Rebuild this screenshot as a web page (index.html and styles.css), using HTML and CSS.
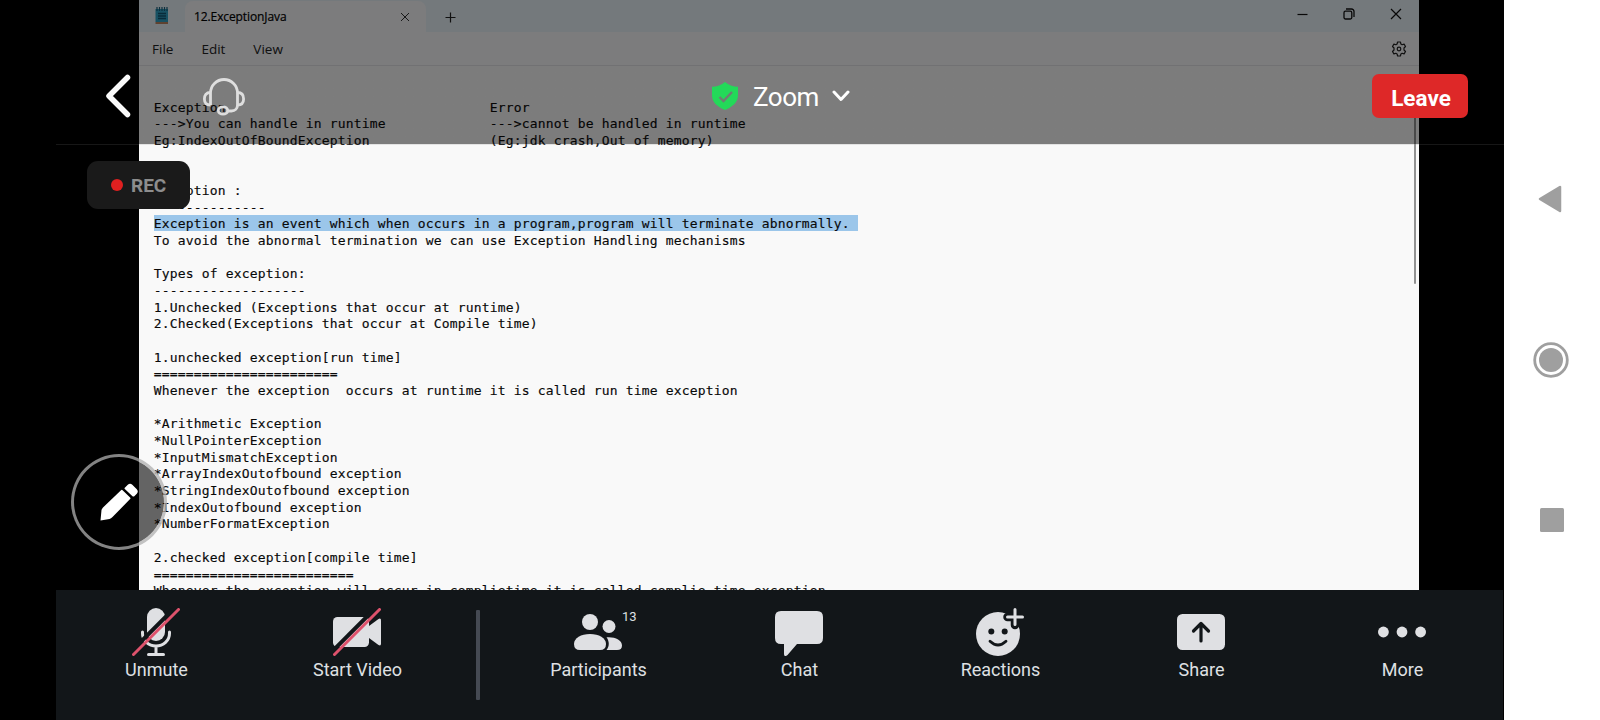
FILE: index.html
```html
<!DOCTYPE html>
<html lang="en">
<head>
<meta charset="utf-8">
<title>Zoom</title>
<link rel="stylesheet" href="styles.css">
</head>
<body>
<div class="device">
  <main class="meeting">
    <section class="shared">
      <div class="tabs">
        <svg class="app-icon" width="14" height="18" viewBox="0 0 14 18"><rect x=".5" y="2" width="12.500" height="13" fill="#2fa3c6"/><path d="M2 0v4M4.500 0v4M7 0v4M9.500 0v4M12 0v4" stroke="#185f7d" stroke-width="1.200"/><path d="M3 6.500h8M3 9h8M3 11.500h8" stroke="#125673" stroke-width="1.400"/><rect x=".5" y="15" width="12.500" height="2" fill="#bd8460"/></svg>
        <div class="tab"><span class="tab-title">12.ExceptionJava</span>
          <svg width="10" height="10" viewBox="0 0 10 10"><path d="M1 1l8 8M9 1L1 9" stroke="#333" stroke-width="1"/></svg></div>
        <svg class="plus" width="11" height="11" viewBox="0 0 11 11"><path d="M5.500 .5v10M.5 5.500h10" stroke="#222" stroke-width="1.200"/></svg>
        <div class="controls">
          <svg width="11" height="12" viewBox="0 0 11 12"><path d="M.5 6.500h10" stroke="#111" stroke-width="1.200"/></svg>
          <svg width="12" height="12" viewBox="0 0 12 12" fill="none" stroke="#111" stroke-width="1.300"><rect x="1" y="3.200" width="7.800" height="7.800" rx="1.500"/><path d="M3 1h5.500a2.500 2.500 0 0 1 2.500 2.500V9"/></svg>
          <svg width="12" height="12" viewBox="0 0 12 12"><path d="M1 1l10 10M11 1L1 11" stroke="#111" stroke-width="1.200"/></svg>
        </div>
      </div>
      <div class="menu"><span>File</span><span>Edit</span><span>View</span>
        <svg class="gear" width="16" height="16" viewBox="0 0 16 16" fill="none" stroke="#222" stroke-width="1.200" stroke-linejoin="round"><path d="M6.600 1h2.800l.5 2 1.200.7 2-.6 1.400 2.400L13 7v2l1.500 1.500-1.400 2.400-2-.6-1.200.7-.5 2H6.600l-.5-2-1.200-.7-2 .6-1.400-2.400L3 9V7L1.500 5.500l1.400-2.400 2 .6L6.100 3z"/><circle cx="8" cy="8" r="1.800"/></svg>
      </div>
      <div class="editor">
<pre class="text">Exception                                 Error
---&gt;You can handle in runtime             ---&gt;cannot be handled in runtime
Eg:IndexOutOfBoundException               (Eg:jdk crash,Out of memory)


Exception :
--------------
<span class="selected">Exception is an event which when occurs in a program,program will terminate abnormally. </span>
To avoid the abnormal termination we can use Exception Handling mechanisms

Types of exception:
-------------------
1.Unchecked (Exceptions that occur at runtime)
2.Checked(Exceptions that occur at Compile time)

1.unchecked exception[run time]
=======================
Whenever the exception  occurs at runtime it is called run time exception

*Arithmetic Exception
*NullPointerException
*InputMismatchException
*ArrayIndexOutofbound exception
*StringIndexOutofbound exception
*IndexOutofbound exception
*NumberFormatException

2.checked exception[compile time]
=========================
Whenever the exception will occur in complietime it is called complie time exception</pre>
        <div class="scroll"></div>
      </div>
    </section>

    <header class="topbar">
      <svg class="back" width="28" height="46" viewBox="0 0 28 46"><path d="M23.500 4.500L5 23l18.500 18.500" fill="none" stroke="#fafafa" stroke-width="5.500" stroke-linecap="round" stroke-linejoin="round"/></svg>
      <svg class="headset" width="44" height="38" viewBox="0 0 44 38" fill="none" stroke="#dedede" stroke-width="2.800"><path d="M8.500 27V15a13.500 13.500 0 0 1 27 0v12c0 3.500-2.500 6-6 6H26"/><path d="M8.500 14.500C4 14.500 2.400 17.500 2.400 21s1.600 6 6.100 6M35.500 14.500c4.500 0 6.100 3 6.100 6.500s-1.600 6-6.100 6"/><ellipse cx="21" cy="32.500" rx="4.700" ry="3.700"/></svg>
      <div class="title">
        <svg width="26" height="28" viewBox="0 0 26 28"><path d="M13 0c3.500 3 8 4.600 13 4.800v8.700c0 6.500-5 11-13 14.500C5 24.500 0 20 0 13.500V4.800C5 4.600 9.500 3 13 0z" fill="#23d959"/><path d="M7.500 15l4 4L20 10" fill="none" stroke="#707b73" stroke-width="2.400"/></svg>
        <span>Zoom</span>
        <svg class="caret" width="18" height="12" viewBox="0 0 18 12"><path d="M2 2l7 7.500L16 2" fill="none" stroke="#fff" stroke-width="3" stroke-linecap="round" stroke-linejoin="round"/></svg>
      </div>
      <button class="leave">Leave</button>
    </header>

    <div class="rec"><i></i><span>REC</span></div>

    <div class="annotate"><svg width="38" height="38" viewBox="0 0 38 38" fill="#fff"><path d="M.5 37.500l1-10.500Q2 25.500 3 24.500L21 7.200q.8-.7 1.600 0l7.500 7.300q.8.800 0 1.600L12.500 34q-1.500 1.500-3 2z"/><path d="M24.800 4.700l3-3q2.300-2 4.500 0l4.500 4.500q2 2.300 0 4.500l-2.500 2.500q-.9.800-1.800 0l-7.700-7.200q-.7-.7 0-1.300z"/></svg></div>

    <nav class="toolbar">
      <div class="tool"><svg width="48" height="48" viewBox="0 0 48 48"><rect x="15" width="18" height="33" rx="9" fill="#dfe0e3"/><path d="M10.500 24v1.500a13.500 12.500 0 0 0 27 0V24M24 38v8" fill="none" stroke="#dfe0e3" stroke-width="3" stroke-linecap="round"/><path d="M16.500 46.500h15" stroke="#dfe0e3" stroke-width="3" stroke-linecap="round"/><path d="M-1 43.500L43.500-1" stroke="#121619" stroke-width="4"/><path d="M1.500 46.500l45-45" stroke="#de526c" stroke-width="3" stroke-linecap="round"/></svg><span>Unmute</span></div>
      <div class="tool"><svg width="48" height="48" viewBox="0 0 48 48"><rect y="9" width="36" height="30" rx="4.500" fill="#dfe0e3"/><path d="M36 18l9.500-7q2.500-1.200 2.500 1.200v23.600q0 2.400-2.500 1.200L36 30z" fill="#dfe0e3"/><path d="M-1 43.500L43.500-1" stroke="#121619" stroke-width="4"/><path d="M1.500 46.500l45-45" stroke="#de526c" stroke-width="3" stroke-linecap="round"/></svg><span>Start Video</span></div>
      <div class="divider"><i></i></div>
      <div class="tool"><svg width="48" height="48" viewBox="0 0 48 48" fill="#dfe0e3"><circle cx="16" cy="14" r="8"/><circle cx="35" cy="18.500" r="6.500"/><path d="M6 42q-6 0-6-6c0-6 7-10 16-10s16 4 16 10q0 6-6 6z"/><path d="M32.500 29.300c8-.8 15.500 2.500 15.500 8.200q0 4.500-5 4.500H32.500c3-3.500 3-8.500 0-12.700z"/></svg><b class="count">13</b><span>Participants</span></div>
      <div class="tool"><svg width="48" height="48" viewBox="0 0 48 48"><path d="M6 3h36q6 0 6 6v21q0 6-6 6H22L12.500 47Q9 49.500 9 46V36H6q-6 0-6-6V9q0-6 6-6z" fill="#dfe0e3"/></svg><span>Chat</span></div>
      <div class="tool"><svg width="48" height="48" viewBox="0 0 48 48"><circle cx="22" cy="26" r="22" fill="#dfe0e3"/><path d="M31.500 9H39M39 9v8" stroke="#121619" stroke-width="8.500" stroke-linecap="round"/><circle cx="15.300" cy="23.500" r="3" fill="#121619"/><circle cx="28.700" cy="23.500" r="3" fill="#121619"/><path d="M14 33.300q8 7.500 16 0" fill="none" stroke="#121619" stroke-width="2.800" stroke-linecap="round"/><path d="M31.500 9h15M39 1.500v15" stroke="#dfe0e3" stroke-width="3" stroke-linecap="round"/></svg><span>Reactions</span></div>
      <div class="tool"><svg width="48" height="48" viewBox="0 0 48 48"><rect y="6" width="48" height="36" rx="5.500" fill="#dfe0e3"/><path d="M24 33V15.500M16.500 23l7.500-7.500 7.500 7.500" fill="none" stroke="#121619" stroke-width="3.200" stroke-linecap="round" stroke-linejoin="round"/></svg><span>Share</span></div>
      <div class="tool"><svg width="48" height="48" viewBox="0 0 48 48" fill="#dfe0e3"><circle cx="5.400" cy="24" r="5.400"/><circle cx="24" cy="24" r="5.400"/><circle cx="42.600" cy="24" r="5.400"/></svg><span>More</span></div>
    </nav>
  </main>
  <aside class="sysnav">
    <svg width="24" height="28" viewBox="0 0 24 28"><path d="M22 2v24L2 14z" fill="#9f9f9f" stroke="#9f9f9f" stroke-width="2.500" stroke-linejoin="round"/></svg>
    <svg width="36" height="36" viewBox="0 0 36 36"><circle cx="18" cy="18" r="16.300" fill="none" stroke="#9f9f9f" stroke-width="2.800"/><circle cx="18" cy="18" r="12" fill="#9f9f9f"/></svg>
    <svg width="24" height="24" viewBox="0 0 24 24"><rect width="24" height="24" rx="1.500" fill="#9f9f9f"/></svg>
  </aside>
</div>
</body>
</html>
```
FILE: styles.css
```css
* { box-sizing: border-box; }
body { margin: 0; background: #000; font-family: Roboto, sans-serif; }
svg { display: block; flex: none; }
.device { display: flex; width: 1600px; height: 720px; overflow: hidden; }
.meeting { position: relative; width: 1504px; height: 720px; background: #000; overflow: hidden; }

.shared { width: 1280px; height: 590px; margin-left: 139px; background: #f9f9f9; overflow: hidden; }
.tabs { display: flex; align-items: center; height: 32px; background: #e8f2f8; }
.app-icon { margin-left: 16px; }
.tab { display: flex; align-items: center; justify-content: space-between; align-self: flex-end; width: 241px; height: 31px; margin-left: 16px; padding: 0 16px 0 9px; border-radius: 8px 8px 0 0; background: #f8f8fa; }
.tab-title { font: 500 12px "Open Sans", sans-serif; letter-spacing: -0.1px; color: #000; -webkit-text-stroke: 0.2px #000; }
.plus { margin: 3px 0 0 19px; }
.controls { display: flex; gap: 35px; margin: -4px 17px 0 auto; }
.menu { display: flex; align-items: center; gap: 28px; height: 34px; padding: 0 12px 0 13px; border-bottom: 1px solid #e3e3e6; background: #f8f8fa; font: 13.500px "Open Sans", sans-serif; color: #222; }
.gear { margin-left: auto; }
.editor { display: flex; justify-content: space-between; padding: 33.700px 3px 0 14.700px; }
.text { margin: 0; font: 13px/16.670px "DejaVu Sans Mono", monospace; letter-spacing: 0.174px; color: #090909; -webkit-text-stroke: 0.150px #090909; }
.selected { background: linear-gradient(#9bc6ea, #9bc6ea) 0 0 / 100% 100%; box-shadow: 0 -1px #9bc6ea; }
.scroll { width: 2px; height: 185px; margin-top: -1px; border-radius: 1px; background: #929292; }

.topbar { position: absolute; top: 0; left: 56px; right: 0; height: 145px; padding: 48px 36px 0 48px; display: flex; align-items: center; background: linear-gradient(rgba(0,0,0,.5), rgba(0,0,0,.5)) 0 0 / 100% 144px no-repeat; border-bottom: 1px solid rgba(128,128,128,.18); }
.headset { margin: 1px 0 0 70px; }
.title { display: flex; align-items: center; gap: 15px; margin-left: 466px; font-size: 26px; letter-spacing: -0.5px; color: #fff; }
.title span { padding-top: 2px; line-height: 30px; }
.caret { margin-left: -2px; }
.leave { width: 96px; height: 44px; margin-left: auto; padding: 3px 0 0 2px; border: 0; border-radius: 7px; background: #de2828; color: #fff; font: 700 22.500px Roboto, sans-serif; }

.rec { position: absolute; left: 87px; top: 161px; width: 103px; height: 48px; padding: 0 0 0 24px; display: flex; align-items: center; gap: 8px; border-radius: 11px; background: #1a1a1a; color: #8d8d8d; font: 700 19px Roboto, sans-serif; }
.rec i { width: 12px; height: 12px; border-radius: 50%; background: #e02020; }
.annotate { position: absolute; left: 71px; top: 454px; width: 96px; height: 96px; display: flex; align-items: center; justify-content: center; border: 3px solid rgba(175,175,175,.75); border-radius: 50%; background: rgba(0,0,0,.6); background-clip: padding-box; }

.toolbar { display: flex; width: 1447px; height: 130px; margin-left: 56px; background: #121619; color: #dfe0e3; }
.tool { position: relative; width: 201px; padding-top: 18px; display: flex; flex-direction: column; align-items: center; font-size: 18px; line-height: 22px; }
.tool svg { margin-right: 1px; }
.tool span { margin-top: 3px; }
.count { position: absolute; left: 124px; top: 20px; font-size: 13px; line-height: 14px; font-weight: 400; }
.divider { width: 40px; padding: 20px 0 0 18px; }
.divider i { display: block; width: 4px; height: 90px; border-radius: 1px; background: #454a53; }

.sysnav { display: flex; flex-direction: column; align-items: center; width: 96px; height: 720px; padding: 185px 1px 0 0; background: #fff; }
.sysnav svg:first-child { margin-right: 3px; }
.sysnav svg:nth-child(2) { margin: 129px 1px 0 0; }
.sysnav svg:nth-child(3) { margin-top: 130px; }
```
